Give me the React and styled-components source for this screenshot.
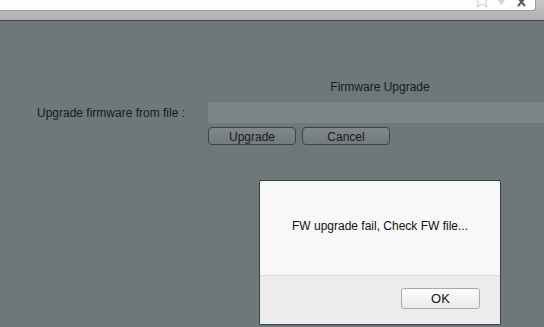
import React from "react";
import styled, { createGlobalStyle } from "styled-components";

const Global = createGlobalStyle`
  html, body { margin: 0; padding: 0; width: 544px; height: 327px; overflow: hidden; }
  body { font-family: "Liberation Sans", Arial, sans-serif; }
`;

const Window = styled.div`
  width: 544px;
  height: 327px;
  display: flex;
  flex-direction: column;
  position: relative;
  overflow: hidden;
`;

const Chrome = styled.div`
  height: 21px;
  flex: none;
  background: linear-gradient(#c6c6c6, #b0b0b0);
  border-bottom: 1px solid #474a4b;
  box-sizing: border-box;
  display: flex;
  align-items: flex-start;
`;

const Omnibox = styled.div`
  width: 536px;
  height: 11px;
  background: #fdfdfd;
  border: 1px solid #9a9a9a;
  border-top: none;
  border-left: none;
  border-bottom-right-radius: 3px;
  box-sizing: border-box;
  display: flex;
  justify-content: flex-end;
  align-items: flex-start;
  padding-right: 9px;
  overflow: hidden;
`;

const Icon = styled.svg`
  display: block;
  flex: none;
  margin-left: ${(p) => p.$gap || 0}px;
`;

const Page = styled.div`
  flex: 1;
  background: #6f7879;
  color: #161a1b;
  font-size: 12px;
  padding-top: 59px;
`;

const Form = styled.div`
  display: grid;
  grid-template-columns: 171px 344px;
  padding-left: 37px;
  row-gap: 4px;
`;

const Title = styled.div`
  grid-column: 2;
  text-align: center;
  line-height: 15px;
  margin-bottom: 3px;
  font-size: 12px;
`;

const Label = styled.div`
  display: flex;
  align-items: center;
  font-size: 12px;
`;

const FileInput = styled.div`
  height: 21px;
  background: #7e8586;
`;

const Buttons = styled.div`
  grid-column: 2;
  display: flex;
  gap: 6px;
`;

const Button = styled.button`
  width: 88px;
  height: 18px;
  padding: 2px 0 0;
  border: 1px solid #3d4243;
  border-radius: 4px;
  background: linear-gradient(#7f8788, #737b7c);
  color: #161a1b;
  font-family: "Liberation Sans", Arial, sans-serif;
  font-size: 12px;
  line-height: 14px;
`;

const Dialog = styled.div`
  position: absolute;
  left: 259px;
  top: 180px;
  width: 242px;
  height: 145px;
  background: #f8f8f8;
  border: 1px solid #3e4344;
  border-radius: 2px;
  box-sizing: border-box;
  display: flex;
  flex-direction: column;
  overflow: hidden;
`;

const Message = styled.div`
  flex: 1;
  display: flex;
  align-items: flex-start;
  justify-content: center;
  padding-top: 38px;
  font-size: 12px;
  line-height: 14px;
  color: #111;
`;

const Footer = styled.div`
  height: 49px;
  flex: none;
  background: #ececec;
  border-top: 1px solid #d9d9d9;
  box-sizing: border-box;
  display: flex;
  justify-content: flex-end;
  padding: 12px 20px 0 0;
`;

const OkButton = styled.button`
  width: 79px;
  height: 21px;
  padding: 0;
  border: 1px solid #a9a9a9;
  border-radius: 3px;
  background: linear-gradient(#fdfdfd, #e9e9e9);
  color: #111;
  font-family: "Liberation Sans", Arial, sans-serif;
  font-size: 13px;
  line-height: 19px;
`;

export default function App() {
  return (
    <Window>
      <Global />
      <Chrome>
        <Omnibox>
          <Icon width="16" height="8" viewBox="0 8 16 8">
            <path
              d="M8 0.5 L10.2 5.6 L15.6 6 L11.5 9.6 L12.8 15 L8 12.1 L3.2 15 L4.5 9.6 L0.4 6 L5.8 5.6 Z"
              fill="none"
              stroke="#c9c9c9"
              strokeWidth="1"
            />
          </Icon>
          <Icon $gap={8} width="7" height="5" viewBox="0 0 7 5">
            <path d="M0 0 L7 0 L3.5 5 Z" fill="#d2d2d2" />
          </Icon>
          <Icon $gap={12} width="9" height="7" viewBox="0 3 9 7">
            <path d="M1 1 L8 9 M8 1 L1 9" fill="none" stroke="#5a5a5a" strokeWidth="2" />
          </Icon>
        </Omnibox>
      </Chrome>
      <Page>
        <Form>
          <Title>Firmware Upgrade</Title>
          <Label>Upgrade firmware from file :</Label>
          <FileInput />
          <Buttons>
            <Button>Upgrade</Button>
            <Button>Cancel</Button>
          </Buttons>
        </Form>
      </Page>
      <Dialog>
        <Message>FW upgrade fail, Check FW file...</Message>
        <Footer>
          <OkButton>OK</OkButton>
        </Footer>
      </Dialog>
    </Window>
  );
}
